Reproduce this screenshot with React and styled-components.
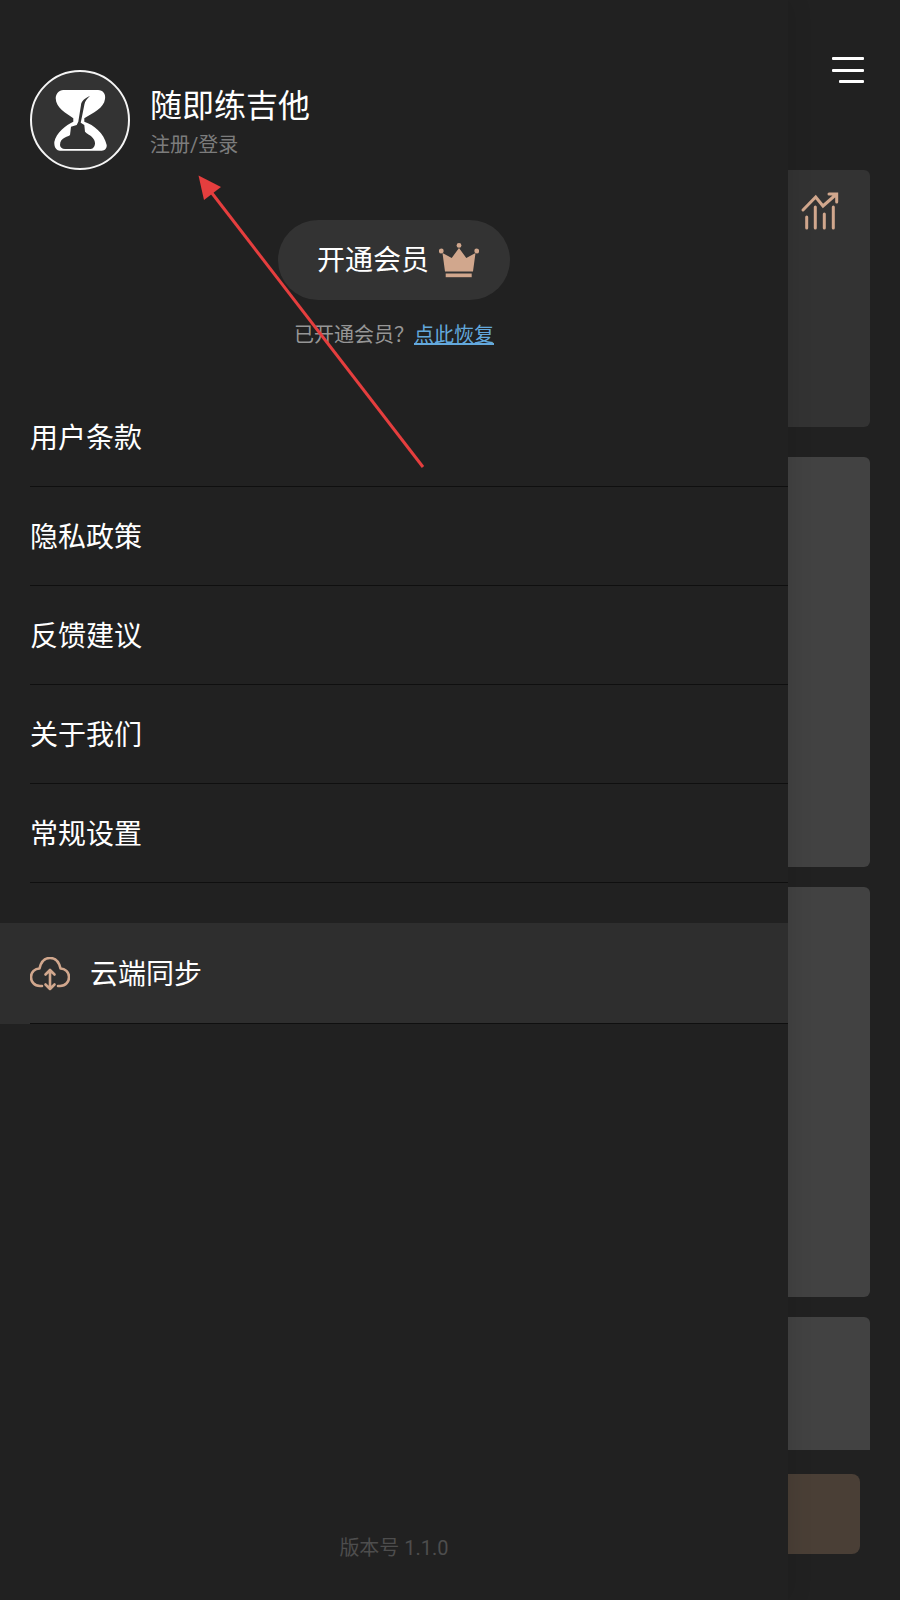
import React from "react";
import styled, { createGlobalStyle } from "styled-components";

const GlobalStyle = createGlobalStyle`
    html, body {
        margin: 0;
        padding: 0;
        background: #212121;
    }
    body {
        font-family: Roboto, "Noto Sans CJK SC", sans-serif;
    }
`;

const Page = styled.div`
    position: relative;
    display: flex;
    width: 900px;
    height: 1600px;
    overflow: hidden;
    background: #212121;
`;

const Drawer = styled.aside`
    position: relative;
    z-index: 1;
    display: flex;
    flex-direction: column;
    flex: 0 0 788px;
    height: 1600px;
    background: #212121;
    box-shadow: 0 0 24px rgba(0, 0, 0, 0.12);
`;

const Profile = styled.div`
    display: flex;
    align-items: center;
    gap: 20px;
    padding: 70px 0 0 30px;
`;

const Avatar = styled.svg`
    display: block;
    flex: 0 0 100px;
    width: 100px;
    height: 100px;
`;

const ProfileText = styled.div`
    display: flex;
    flex-direction: column;
    gap: 1px;
    padding-top: 3px;
`;

const AppName = styled.div`
    font-size: 32px;
    line-height: 46px;
    color: #fff;
`;

const LoginLink = styled.div`
    font-size: 20px;
    line-height: 30px;
    color: #7c7c7c;
`;

const MemberButton = styled.button`
    display: flex;
    align-items: center;
    justify-content: center;
    gap: 10px;
    box-sizing: border-box;
    width: 232px;
    height: 80px;
    margin: 50px auto 0;
    padding: 0 0 4px 8px;
    border: none;
    border-radius: 40px;
    background: #333333;
    color: #fff;
    font-family: inherit;
    font-size: 28px;
`;

const Crown = styled.svg`
    display: block;
    width: 40px;
    height: 36px;
    margin-top: 6px;
`;

const Restore = styled.div`
    margin-top: 18px;
    height: 34px;
    text-align: center;
    font-size: 20px;
    line-height: 34px;
    color: #969696;
`;

const RestoreLink = styled.a`
    color: #63a8dc;
    text-decoration: underline;
`;

const Menu = styled.nav`
    display: flex;
    flex-direction: column;
    margin-top: 36px;
`;

const MenuRow = styled.div`
    display: flex;
    align-items: center;
    box-sizing: border-box;
    height: 99px;
    padding-bottom: 3px;
    margin-left: 30px;
    border-bottom: 1px solid #0f0f0f;
    font-size: 28px;
    color: #fff;
`;

const SyncRow = styled.div`
    display: flex;
    flex-direction: column;
    margin-top: 40px;
    background: #2e2e2e;
`;

const SyncInner = styled.div`
    display: flex;
    align-items: center;
    gap: 20px;
    box-sizing: border-box;
    height: 101px;
    padding-bottom: 3px;
    margin-left: 30px;
    border-bottom: 1px solid #0f0f0f;
    font-size: 28px;
    color: #fff;
`;

const CloudIcon = styled.svg`
    display: block;
    width: 40px;
    height: 34px;
    margin-top: 5px;
`;

const Version = styled.div`
    margin-top: auto;
    padding-bottom: 38px;
    text-align: center;
    font-size: 20px;
    line-height: 28px;
    color: #4d4d4d;
`;

const Pane = styled.main`
    display: flex;
    flex-direction: column;
    flex: 1;
    min-width: 0;
`;

const PaneHeader = styled.div`
    display: flex;
    justify-content: flex-end;
    height: 170px;
    padding: 57px 36px 0 0;
    box-sizing: border-box;
`;

const MenuLines = styled.div`
    display: flex;
    flex-direction: column;
    align-items: flex-end;
    gap: 8.5px;
    width: 32px;
`;

const MenuLine = styled.span`
    display: block;
    width: ${(p) => (p.$short ? "25px" : "32px")};
    height: 3px;
    border-radius: 1px;
    background: #fff;
`;

const Cards = styled.div`
    display: flex;
    flex-direction: column;
    height: 1280px;
    margin-right: 30px;
    overflow: hidden;
`;

const Card = styled.div`
    flex: 0 0 ${(p) => p.$h}px;
    margin-bottom: ${(p) => p.$gap || 0}px;
    padding: 20px 0 0 12px;
    box-sizing: border-box;
    border-radius: ${(p) => (p.$clipped ? "0 6px 0 0" : "0 6px 6px 0")};
    background: ${(p) => p.$bg};
`;

const ChartIcon = styled.svg`
    display: block;
    width: 40px;
    height: 40px;
`;

const Footer = styled.div`
    padding: 24px 40px 0 0;
`;

const BrownCard = styled.div`
    height: 80px;
    border-radius: 0 8px 8px 0;
    background: #4a3f36;
`;

const PointerArrow = styled.svg`
    position: absolute;
    left: 0;
    top: 0;
    z-index: 2;
    pointer-events: none;
`;

const menuItems = ["用户条款", "隐私政策", "反馈建议", "关于我们", "常规设置"];

const App = () => {
    return (
        <Page>
            <GlobalStyle />
            <Drawer>
                <Profile>
                    <Avatar viewBox="0 0 100 100">
                        <circle cx="50" cy="50" r="49" fill="#333" stroke="#f4f4f4" strokeWidth="2" />
                        <path
                            fill="#fff"
                            d="M33.300 20 H68 C73 20 76 24 75 29 C74 38 63 43 54.300 48.300 L54.300 51.700 C64 55 74 63 76.700 75 C77 78 75 80.700 71.700 80.700 H30 C27 80.700 24 78 24.300 72 C26 63 36 55 43.300 51.700 L43.300 48.300 C36 43 26 38 25.700 28.300 C25.700 24 29 20 33.300 20 Z"
                        />
                        <path
                            fill="#333"
                            d="M60 26 C57 29 55 31 54.500 34 L52.300 45 L50.700 52.700 L54.300 55 L55 61.700 C57 64 60 65 61.700 66.700 C64 69 65 71 65 73.300 C65 76 63.500 79 60.700 79 H35 C32 79 30 77 30 75 C30 71 32 69 35 67.500 C37 66.500 39 66 40 65 L41 56.700 L46.700 55 L48.300 51.700 L51 35 C51.300 31 55 28 60 26 Z"
                        />
                    </Avatar>
                    <ProfileText>
                        <AppName>随即练吉他</AppName>
                        <LoginLink>注册/登录</LoginLink>
                    </ProfileText>
                </Profile>

                <MemberButton>
                    开通会员
                    <Crown viewBox="0 0 40 36">
                        <g fill="#d1a78d">
                            <circle cx="2.300" cy="8" r="2.400" />
                            <circle cx="20" cy="2.400" r="2.400" />
                            <circle cx="37.700" cy="8" r="2.400" />
                            <path d="M3.500 10 L12.700 15 L20 5 L27.300 15 L36.500 10 L34 28.500 H6 Z" />
                            <rect x="6.700" y="30.500" width="26" height="3.700" />
                        </g>
                    </Crown>
                </MemberButton>

                <Restore>
                    已开通会员？<RestoreLink>点此恢复</RestoreLink>
                </Restore>

                <Menu>
                    {menuItems.map((item) => (
                        <MenuRow key={item}>{item}</MenuRow>
                    ))}
                </Menu>

                <SyncRow>
                    <SyncInner>
                        <CloudIcon viewBox="0 0 40 34" fill="none" stroke="#d1a78d" strokeWidth="2.600" strokeLinecap="round" strokeLinejoin="round">
                            <path d="M12 29 H10 C4 29 1 24.500 1 20 C1 15 5 11.500 9.500 11.500 C11 5 15 1 20 1 C25 1 29 5 30.500 11.500 C35 11.500 39 15 39 20 C39 24.500 36 29 30 29 H28" />
                            <path d="M20 13 V32 M15.500 17.500 L20 13 L24.500 17.500 M15.500 27.500 L20 32 L24.500 27.500" />
                        </CloudIcon>
                        云端同步
                    </SyncInner>
                </SyncRow>

                <Version>版本号 1.1.0</Version>
            </Drawer>

            <Pane>
                <PaneHeader>
                    <MenuLines>
                        <MenuLine />
                        <MenuLine />
                        <MenuLine $short />
                    </MenuLines>
                </PaneHeader>
                <Cards>
                    <Card $h={257} $gap={30} $bg="#333333">
                        <ChartIcon viewBox="0 0 40 40" fill="none" stroke="#d1a78d" strokeWidth="3" strokeLinecap="round">
                            <path d="M6.700 27 V38 M15.300 17 V38 M24.300 24 V38 M33.300 17 V38" />
                            <path d="M3 20 L15.700 7 L23 16 L35.500 5 M29 4 H36.700 V12" />
                        </ChartIcon>
                    </Card>
                    <Card $h={410} $gap={20} $bg="#424242" />
                    <Card $h={410} $gap={20} $bg="#424242" />
                    <Card $h={133} $bg="#424242" $clipped />
                </Cards>
                <Footer>
                    <BrownCard />
                </Footer>
            </Pane>

            <PointerArrow width="900" height="1600" viewBox="0 0 900 1600">
                <path d="M423 467 L208 188" stroke="#e53e3e" strokeWidth="3" fill="none" />
                <path d="M198.500 175.500 L221 187 L204 200 Z" fill="#e53e3e" />
            </PointerArrow>
        </Page>
    );
};

export default App;
